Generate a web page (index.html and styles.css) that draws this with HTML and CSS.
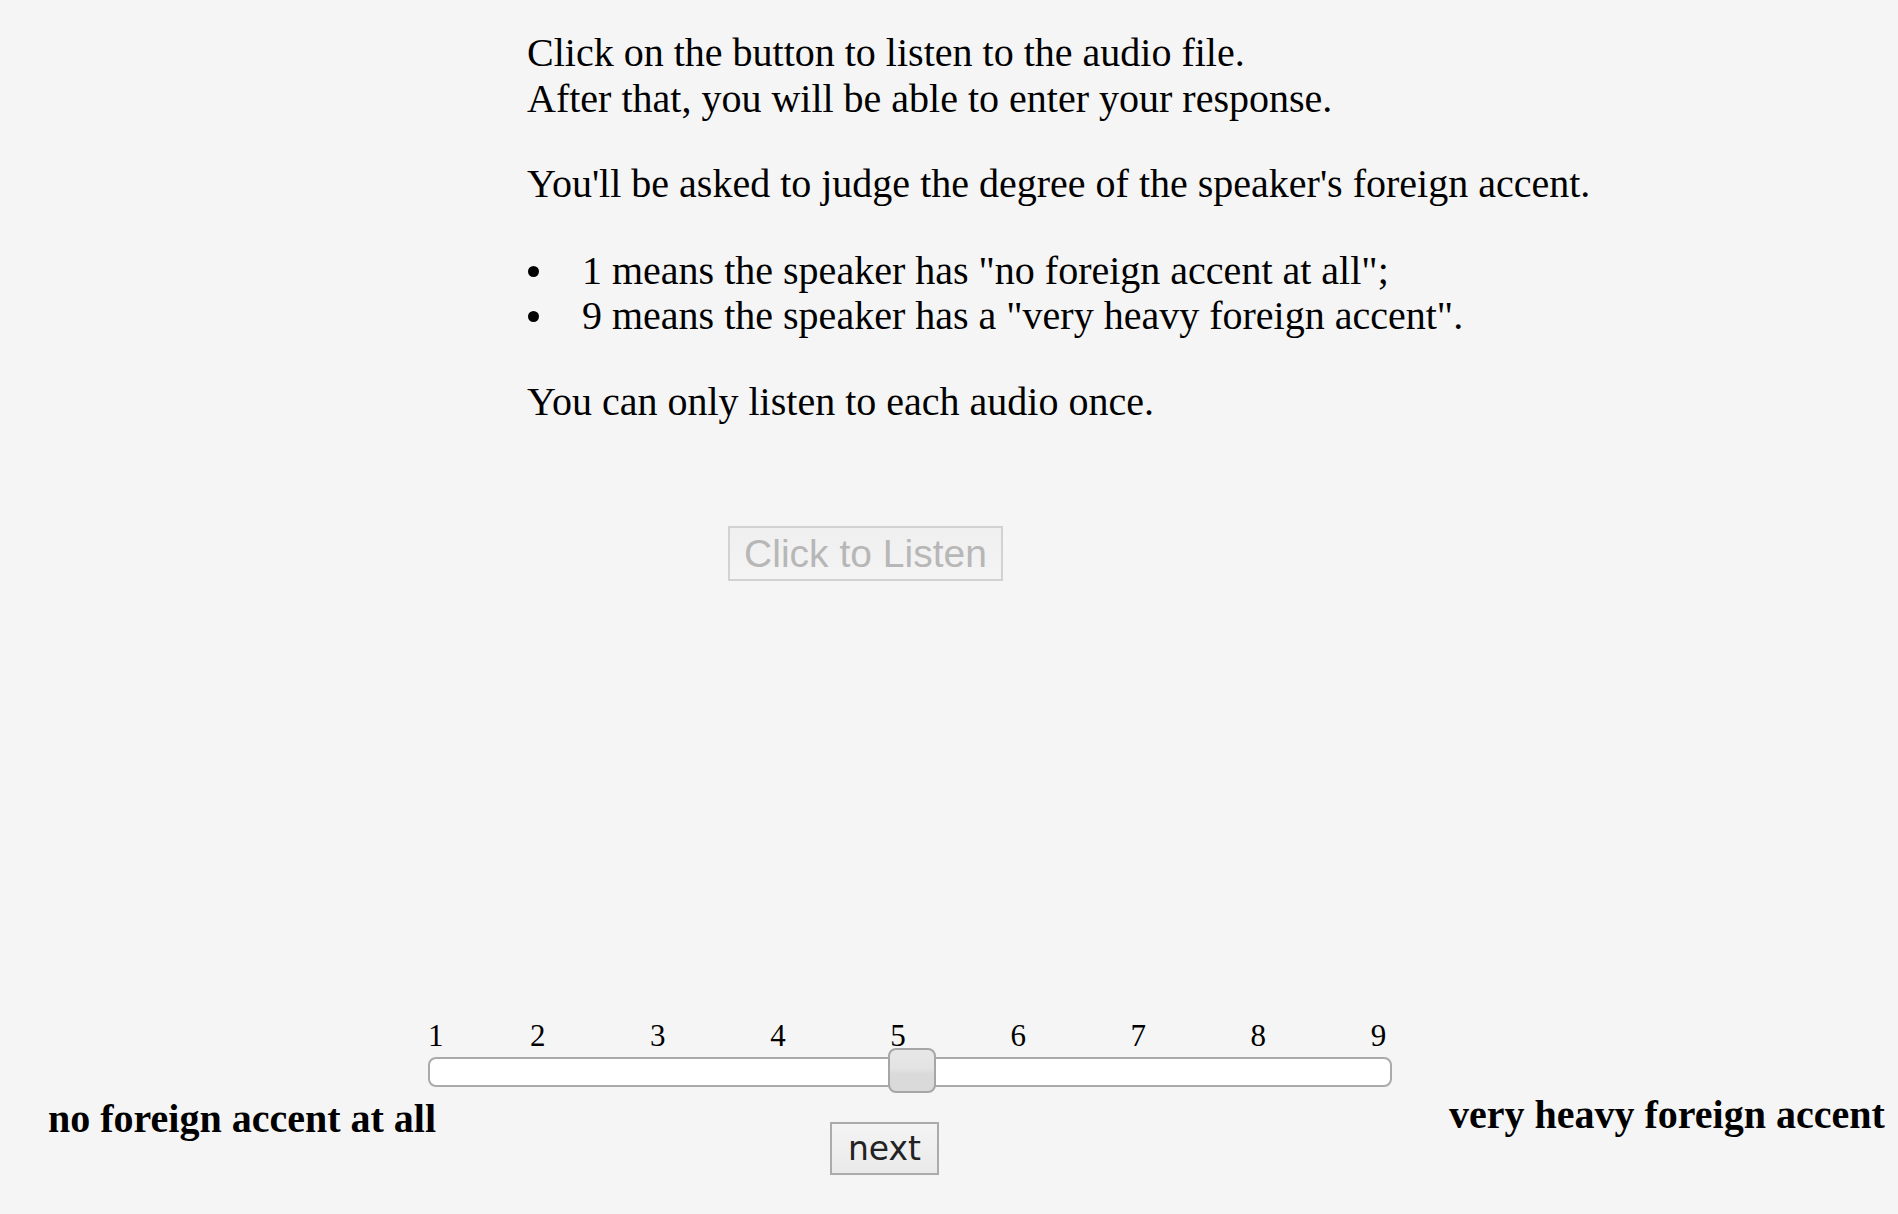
FILE: index.html
```html
<!DOCTYPE html>
<html lang="en">
<head>
<meta charset="utf-8">
<title>Accent rating</title>
<link rel="stylesheet" href="styles.css">
</head>
<body>
<main class="page">
  <section class="instructions">
    <p class="para">Click on the button to listen to the audio file.<br>After that, you will be able to enter your response.</p>
    <p class="para gap">You'll be asked to judge the degree of the speaker's foreign accent.</p>
    <ul class="points">
      <li>1 means the speaker has "no foreign accent at all";</li>
      <li>9 means the speaker has a "very heavy foreign accent".</li>
    </ul>
    <p class="para gap">You can only listen to each audio once.</p>
    <div class="listen-row"><button class="listen" disabled>Click to Listen</button></div>
  </section>
  <section class="scale">
    <div class="end-label left">no foreign accent at all</div>
    <div class="slider-col">
      <div class="ticks">
        <span class="tick">1</span><span class="tick second">2</span><span class="tick">3</span><span class="tick">4</span><span class="tick">5</span><span class="tick">6</span><span class="tick">7</span><span class="tick">8</span><span class="tick">9</span>
      </div>
      <div class="track"><div class="handle"></div></div>
      <button class="next">next</button>
    </div>
    <div class="end-label right">very heavy foreign accent</div>
  </section>
</main>
</body>
</html>
```
FILE: styles.css
```css
html, body {
  margin: 0;
  padding: 0;
}

body {
  background: #f5f5f5;
  color: #000;
  font-family: "Liberation Serif", "Times New Roman", serif;
  width: 1898px;
  height: 1214px;
  overflow: hidden;
}

.instructions {
  padding: 30px 0 0 527px;
  font-size: 40px;
  line-height: 46px;
}

.para {
  margin: 0;
}

.para.gap {
  margin-top: 39px;
}

.points {
  list-style: none;
  margin: 41px 0 0 0;
  padding: 0;
}

.points li {
  line-height: 45px;
}

.points li::before {
  content: "";
  display: inline-block;
  width: 11px;
  height: 11px;
  margin: 0 43px 0 1px;
  border-radius: 50%;
  background: #000;
  vertical-align: 7px;
}

.points + .para.gap {
  margin-top: 41px;
}

.listen-row {
  margin-top: 101px;
  padding-left: 201px;
}

.listen {
  box-sizing: border-box;
  width: 275px;
  height: 55px;
  padding: 0;
  border: 2px solid #d2d2d2;
  background: linear-gradient(to bottom, #efefef, #f4f4f4);
  color: #b7b7b7;
  font-family: "Liberation Sans", Arial, sans-serif;
  font-size: 39px;
  line-height: 1;
}

.scale {
  display: flex;
  align-items: flex-start;
  margin-top: 437px;
}

.end-label {
  font-size: 40px;
  font-weight: bold;
  line-height: 46px;
  white-space: nowrap;
}

.end-label.left {
  box-sizing: border-box;
  width: 428px;
  padding-left: 48px;
  margin-top: 78px;
}

.end-label.right {
  padding-left: 57px;
  margin-top: 74px;
}

.slider-col {
  width: 964px;
  flex: none;
}

.ticks {
  display: flex;
  height: 36px;
  font-size: 31px;
  line-height: 36px;
}

.tick {
  margin-left: 104.6px;
}

.tick:first-child {
  margin-left: 0;
}

.tick.second {
  margin-left: 86.5px;
}

.track {
  position: relative;
  box-sizing: border-box;
  height: 30px;
  margin-top: 3px;
  border: 2px solid #aaaaaa;
  border-radius: 8px;
  background: #ffffff;
}

.handle {
  position: absolute;
  left: 458px;
  top: -11px;
  box-sizing: border-box;
  width: 48px;
  height: 45px;
  border: 2px solid #a6a6a6;
  border-radius: 8px;
  background: linear-gradient(to bottom, #e7e7e7 0%, #e3e3e3 45%, #dadada 58%, #dadada 100%);
}

.next {
  display: block;
  box-sizing: border-box;
  width: 109px;
  height: 53px;
  margin: 35px 0 0 402px;
  padding: 0;
  border: 2px solid #ababab;
  background: linear-gradient(to bottom, #f4f4f4, #e9e9e9);
  color: #222;
  font-family: "DejaVu Sans", Verdana, sans-serif;
  font-size: 33px;
  line-height: 1;
}
```
